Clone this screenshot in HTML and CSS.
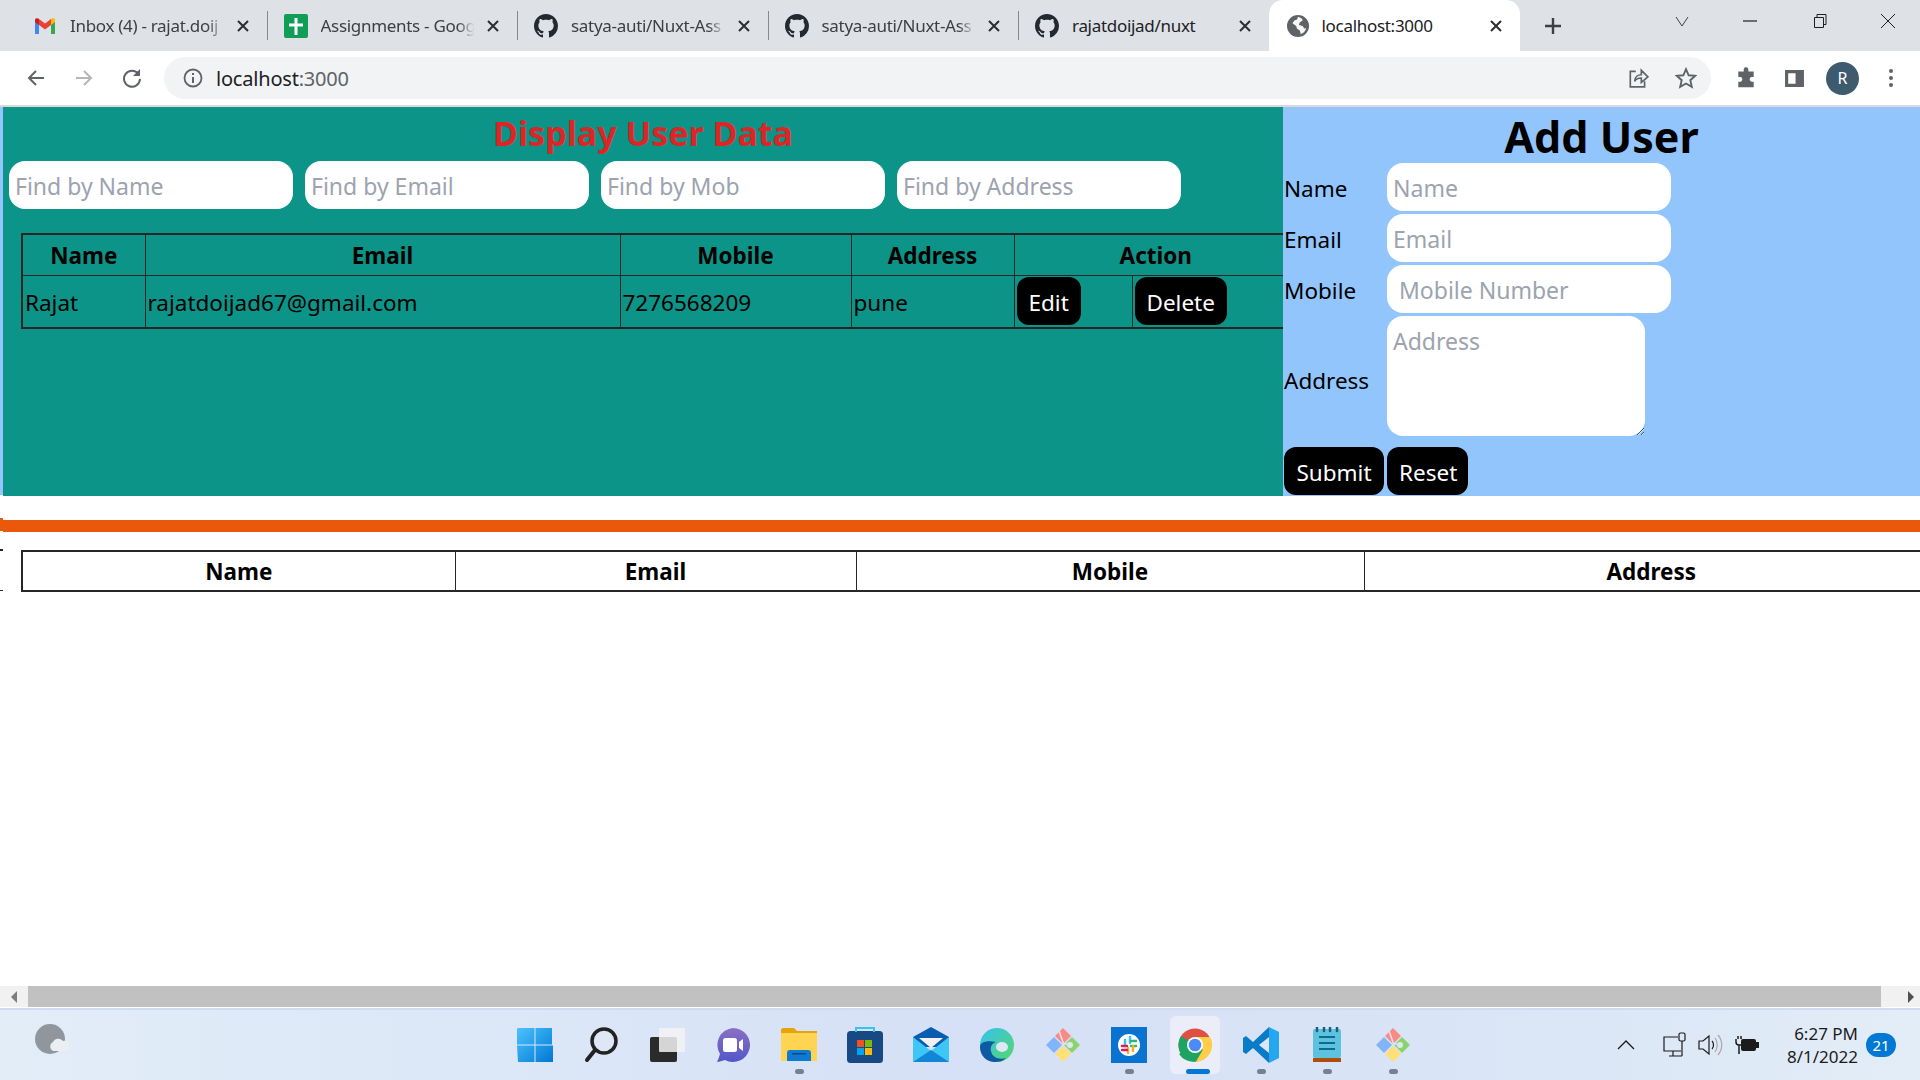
FILE: index.html
```html
<!DOCTYPE html>
<html lang="en">
<head>
  <meta charset="UTF-8" />
  <title>localhost:3000</title>
  <link rel="stylesheet" href="styles.css">
</head>
<body>
  <svg class="defs" width="0" height="0">
    <symbol id="gh" viewBox="0 0 16 16"><path fill="#24292f" d="M8 0C3.58 0 0 3.58 0 8c0 3.54 2.29 6.53 5.47 7.59.4.07.55-.17.55-.38 0-.19-.01-.82-.01-1.49-2.01.37-2.53-.49-2.69-.94-.09-.23-.48-.94-.82-1.13-.28-.15-.68-.52-.01-.53.63-.01 1.08.58 1.23.82.72 1.21 1.87.87 2.33.66.07-.52.28-.87.51-1.07-1.78-.2-3.64-.89-3.64-3.95 0-.87.31-1.59.82-2.15-.08-.2-.36-1.02.08-2.12 0 0 .67-.21 2.2.82.64-.18 1.32-.27 2-.27.68 0 1.36.09 2 .27 1.53-1.04 2.2-.82 2.2-.82.44 1.1.16 1.92.08 2.12.51.56.82 1.27.82 2.15 0 3.07-1.87 3.75-3.65 3.95.29.25.54.73.54 1.48 0 1.07-.01 1.93-.01 2.2 0 .21.15.46.55.38A8.013 8.013 0 0016 8c0-4.42-3.58-8-8-8z"/></symbol>
    <symbol id="x" viewBox="0 0 14 14"><path d="M2 2l10 10M12 2L2 12" stroke="#2b2d30" stroke-width="2" fill="none"/></symbol>
    <symbol id="gitk" viewBox="0 0 36 36">
      <path fill="#f98a85" d="M18 1l8 8-8 8-8-8z"/>
      <path fill="#8cd46a" d="M27 10l8 8-8 8-8-8z"/>
      <path fill="#ffe078" d="M18 19l8 8-8 8-8-8z"/>
      <path fill="#82b4f8" d="M9 10l8 8-8 8-8-8z"/>
      <circle cx="25" cy="18" r="3" fill="#dfe6f5"/>
      <path d="M14 4l5 14M22 17h-4" stroke="#dfe6f5" stroke-width="1.500" fill="none"/>
    </symbol>
  </svg>

  <div class="tabstrip">
    <div class="tab">
      <svg class="favicon" viewBox="0 0 24 24"><path fill="#4285f4" d="M2 6v14h4V10z"/><path fill="#34a853" d="M18 10v10h4V6z"/><path fill="#ea4335" d="M6 5v6l6 4.500 6-4.500V5l-6 4.500z"/><path fill="#fbbc04" d="M18 5v6l4-3V6c0-2-2.500-2.500-4-1z"/><path fill="#c5221f" d="M6 5v6L2 8V6c0-2 2.500-2.500 4-1z"/></svg>
      <span class="tab-title">Inbox (4) - rajat.doij</span>
      <svg class="tab-close"><use href="#x"/></svg>
    </div>
    <i class="sep"></i>
    <div class="tab">
      <svg class="favicon" viewBox="0 0 24 24"><rect width="24" height="24" rx="2" fill="#0f9d58"/><path d="M10.500 4h3v5.500H19v3h-5.500V21h-3v-8.500H5v-3h5.500z" fill="#fff"/></svg>
      <span class="tab-title">Assignments - Goog</span>
      <svg class="tab-close"><use href="#x"/></svg>
    </div>
    <i class="sep"></i>
    <div class="tab">
      <svg class="favicon"><use href="#gh"/></svg>
      <span class="tab-title">satya-auti/Nuxt-Ass</span>
      <svg class="tab-close"><use href="#x"/></svg>
    </div>
    <i class="sep"></i>
    <div class="tab">
      <svg class="favicon"><use href="#gh"/></svg>
      <span class="tab-title">satya-auti/Nuxt-Ass</span>
      <svg class="tab-close"><use href="#x"/></svg>
    </div>
    <i class="sep"></i>
    <div class="tab">
      <svg class="favicon"><use href="#gh"/></svg>
      <span class="tab-title no-fade">rajatdoijad/nuxt</span>
      <svg class="tab-close"><use href="#x"/></svg>
    </div>
    <div class="tab active">
      <svg class="favicon globe" viewBox="0 0 24 24"><circle cx="12" cy="12" r="11" fill="#5f6368"/><path fill="#fff" d="M12 2c3 1 5 2 5 4l-3 2-1 3 4 1 2 3 2-1c-1 4-3 6-6 7l-1-4-3-2-1-3-4-3 2-3 3-1z" opacity=".95"/><circle cx="12" cy="12" r="11" fill="none" stroke="#5f6368" stroke-width="2"/></svg>
      <span class="tab-title no-fade">localhost:3000</span>
      <svg class="tab-close"><use href="#x"/></svg>
    </div>
    <svg class="new-tab" viewBox="0 0 18 18"><path d="M9 1v16M1 9h16" stroke="#3c4043" stroke-width="2.400"/></svg>
    <div class="win-controls">
      <svg viewBox="0 0 16 16" class="win-caret"><path d="M2 4l6 9 6-9" stroke="#3c4043" fill="none"/></svg>
      <svg viewBox="0 0 16 16" class="win-min"><path d="M1 8h14" stroke="#1f1f1f" stroke-width="1.200"/></svg>
      <svg viewBox="0 0 16 16" class="win-max"><path d="M2.500 4.500h9v10h-9zM5 4.500V1.500h9v10h-2.500" stroke="#1f1f1f" fill="none"/></svg>
      <svg viewBox="0 0 16 16" class="win-cls"><path d="M1 1l14 14M15 1L1 15" stroke="#1f1f1f" fill="none"/></svg>
    </div>
  </div>

  <div class="toolbar">
    <svg class="tool" viewBox="0 0 20 20"><path d="M18 10H3M10 3l-7 7 7 7" stroke="#5f6368" stroke-width="2" fill="none"/></svg>
    <svg class="tool" viewBox="0 0 20 20"><path d="M2 10h15M10 3l7 7-7 7" stroke="#b4b6b9" stroke-width="2" fill="none"/></svg>
    <svg class="tool" viewBox="0 0 20 20"><path d="M16.500 6A8 8 0 1 0 18 11" stroke="#5f6368" stroke-width="2" fill="none"/><path d="M18 1v7h-7z" fill="#5f6368"/></svg>
    <div class="omnibox">
      <svg class="info" viewBox="0 0 20 20"><circle cx="10" cy="10" r="8.500" stroke="#5f6368" stroke-width="1.800" fill="none"/><path d="M10 9v6M10 5v2" stroke="#5f6368" stroke-width="2"/></svg>
      <span class="url">localhost<span class="url-port">:3000</span></span>
      <svg class="omni-icon" viewBox="0 0 20 20"><path d="M8 4H3v14h13v-5" stroke="#5f6368" stroke-width="1.500" fill="none"/><path d="M7 13c0-4 3-6 6-6V3l6 6-6 5v-4c-3 0-5 1-6 3z" stroke="#5f6368" stroke-width="1.500" fill="none"/></svg>
      <svg class="omni-icon star" viewBox="0 0 20 20"><path d="M10 2l2.400 5.500 6 .5-4.500 4 1.400 6L10 15l-5.300 3 1.400-6L1.600 8l6-.5z" stroke="#5f6368" stroke-width="1.700" fill="none"/></svg>
    </div>
    <svg class="ext" viewBox="0 0 20 20"><path fill="#5f6368" d="M8 1.500a2.300 2.300 0 0 1 4 0c.3.7.2 1.500.2 2.500H17v5c-1 0-1.800-.1-2.500.2a2.300 2.300 0 0 0 0 4c.7.300 1.500.3 2.500.3v5H3v-5c1 0 2 0 2.500-.3a2.300 2.300 0 0 0 0-4C5 8.900 4 9 3 9V4h5c0-1-.2-1.800 0-2.500z"/></svg>
    <svg class="panel-icon" viewBox="0 0 20 20"><path fill="#5f6368" d="M1 2h18v16H1zm3 3v10h7V5z"/></svg>
    <div class="avatar">R</div>
    <svg class="dots" viewBox="0 0 4 20"><circle cx="2" cy="3" r="2" fill="#5f6368"/><circle cx="2" cy="10" r="2" fill="#5f6368"/><circle cx="2" cy="17" r="2" fill="#5f6368"/></svg>
  </div>

  <div class="page">
    <div class="edge">
      <div class="edge-blue"></div>
      <div class="edge-orange"></div>
      <div class="edge-tick"></div>
      <div class="edge-tick tick-thin"></div>
    </div>
    <div class="content">
      <div class="top">
        <section class="display">
          <h1 class="display-title">Display User Data</h1>
          <div class="filters">
            <input class="field" placeholder="Find by Name">
            <input class="field" placeholder="Find by Email">
            <input class="field" placeholder="Find by Mob">
            <input class="field" placeholder="Find by Address">
          </div>
          <table class="users">
            <colgroup><col class="u-name"><col class="u-email"><col class="u-mob"><col class="u-addr"><col class="u-edit"><col class="u-del"></colgroup>
            <tr>
              <th>Name</th><th>Email</th><th>Mobile</th><th>Address</th><th colspan="2">Action</th>
            </tr>
            <tr>
              <td>Rajat</td>
              <td>rajatdoijad67@gmail.com</td>
              <td>7276568209</td>
              <td>pune</td>
              <td class="cell-btn"><button class="btn">Edit</button></td>
              <td class="cell-btn"><button class="btn">Delete</button></td>
            </tr>
          </table>
        </section>
        <section class="add">
          <h1 class="add-title">Add User</h1>
          <form class="add-form">
            <label>Name</label><input class="field" placeholder="Name">
            <label>Email</label><input class="field" placeholder="Email">
            <label>Mobile</label><input class="field field-wide" placeholder="Mobile Number">
            <label class="label-area">Address</label><textarea class="field area" placeholder="Address"></textarea>
          </form>
          <div class="add-actions">
            <button class="btn">Submit</button>
            <button class="btn">Reset</button>
          </div>
        </section>
      </div>
      <div class="rule"></div>
      <table class="users-2">
        <colgroup><col class="v-name"><col class="v-email"><col class="v-mob"><col class="v-addr"></colgroup>
        <tr><th>Name</th><th>Email</th><th>Mobile</th><th>Address</th></tr>
      </table>
    </div>
  </div>

  <div class="hscroll">
    <div class="hs-btn"><i class="arrow-l"></i></div>
    <div class="hs-thumb"></div>
    <div class="hs-btn hs-right"><i class="arrow-r"></i></div>
  </div>

  <div class="taskbar">
    <div class="weather">
      <svg viewBox="0 0 34 32" width="34" height="32"><circle cx="15" cy="15" r="15" fill="#8f969e"/><path d="M18 27a5 5 0 0 1 0-9 6 6 0 0 1 10-1 5 5 0 0 1 3 10z" fill="#eceff2"/></svg>
    </div>
    <div class="task-icons">
      <div class="ti"><svg viewBox="0 0 36 36" width="36" height="36"><defs><linearGradient id="w" x1="0" y1="0" x2="1" y2="1"><stop offset="0" stop-color="#4cc2ff"/><stop offset="1" stop-color="#0078d4"/></linearGradient></defs><path fill="url(#w)" d="M1 1h16.500v16.500H0V2zM18.500 1H35v16.500H18.500zM0 18.500h17.500V35H1zM18.500 18.500H36V35H18.500z"/></svg></div>
      <div class="ti"><svg viewBox="0 0 34 36" width="34" height="36"><circle cx="20" cy="14" r="12" stroke="#222" stroke-width="3.500" fill="#dfe6f5"/><path d="M11 23L3 33" stroke="#222" stroke-width="4" stroke-linecap="round"/></svg></div>
      <div class="ti"><svg viewBox="0 0 36 36" width="36" height="36"><rect x="1" y="10" width="27" height="25" rx="2" fill="#2b2b2b"/><rect x="10" y="1" width="26" height="24" rx="1" fill="#f3f3f3" opacity=".85"/></svg></div>
      <div class="ti"><svg viewBox="0 0 36 36" width="36" height="36"><defs><linearGradient id="c" x1="0" y1="0" x2="0" y2="1"><stop offset="0" stop-color="#8b6fc4"/><stop offset="1" stop-color="#5258c8"/></linearGradient></defs><path fill="url(#c)" d="M18 1a17 17 0 1 1-8 32l-7 2c-1 0-1-1 0-2l2-6A17 17 0 0 1 18 1z"/><rect x="8" y="11" width="14" height="14" rx="2.500" fill="#fff"/><path d="M24 15l4-3v12l-4-3z" fill="#fff"/></svg></div>
      <div class="ti ti-run"><svg viewBox="0 0 36 36" width="36" height="36"><path fill="#e3a50b" d="M0 3c0-1 1-2 2-2h11l3 3h20v28H0z"/><path fill="#ffd452" d="M0 6h36v28H0z"/><path fill="#0f7bd0" d="M6 34v-8c0-2 1-3 3-3h18c2 0 3 1 3 3v8z"/><rect x="11" y="26" width="14" height="1.500" fill="#0a4d8a"/></svg></div>
      <div class="ti"><svg viewBox="0 0 36 36" width="36" height="36"><rect y="4" width="36" height="32" rx="3.500" fill="#174a85"/><path d="M9 5V1h18v4" stroke="#35c4f0" stroke-width="2" fill="none"/><rect x="10" y="13" width="7" height="7" fill="#f25022"/><rect x="18" y="13" width="7" height="7" fill="#7fba00"/><rect x="10" y="21" width="7" height="7" fill="#00a4ef"/><rect x="18" y="21" width="7" height="7" fill="#ffb900"/></svg></div>
      <div class="ti"><svg viewBox="0 0 36 36" width="36" height="36"><path fill="#0a5cb0" d="M0 10L18 0l18 10v10H0z"/><path fill="#f2f2f2" d="M6 11h24l-12 10z"/><path fill="#3ec6f7" d="M0 10l18 14 18-14v25H0z"/><path fill="#1186d6" d="M0 35l18-12 18 12z"/></svg></div>
      <div class="ti"><svg viewBox="0 0 36 36" width="36" height="36"><defs><linearGradient id="e" x1="0" y1="0" x2="1" y2="1"><stop offset="0" stop-color="#35c1f1"/><stop offset="1" stop-color="#56d86a"/></linearGradient></defs><circle cx="18" cy="18" r="17" fill="url(#e)"/><path fill="#0c59a4" d="M1 20c0 9 7 15 15 15 4 0 8-1 11-4-6 2-14 0-15-7-1-4 1-8 5-9-9-2-16 0-16 5z"/><ellipse cx="23" cy="20" rx="6" ry="5" fill="#dfe6f5"/></svg></div>
      <div class="ti"><svg width="36" height="36"><use href="#gitk"/></svg></div>
      <div class="ti ti-run"><svg viewBox="0 0 36 36" width="36" height="36"><rect width="36" height="36" fill="#0a72d1"/><circle cx="18" cy="18" r="11" fill="#fff"/><path d="M19 10v6M14 13v6" stroke="#36c5f0" stroke-width="2.500" stroke-linecap="round"/><path d="M20 14h5M20 19h5" stroke="#2eb67d" stroke-width="2.500" stroke-linecap="round"/><path d="M22 19v5M17 21v5" stroke="#ecb22e" stroke-width="2.500" stroke-linecap="round"/><path d="M11 19h5M11 23h5" stroke="#e01e5a" stroke-width="2.500" stroke-linecap="round"/></svg></div>
      <div class="ti ti-active"><svg viewBox="0 0 34 34" width="34" height="34"><circle cx="17" cy="17" r="16.500" fill="#dd5144"/><path d="M17 17L3 26A16.500 16.500 0 0 1 3 8z" fill="#1da462"/><path d="M17 9h15a16.500 16.500 0 0 1-14 24.500L10 22z" fill="#ffcd46"/><path d="M1 26a16.500 16.500 0 0 0 17 7.500l7-12H9z" fill="#1da462"/><circle cx="17" cy="17" r="8" fill="#fff"/><circle cx="17" cy="17" r="6.300" fill="#4c8bf5"/></svg></div>
      <div class="ti ti-run"><svg viewBox="0 0 36 36" width="36" height="36"><path fill="#25a6f0" d="M26 0l10 5v26l-10 5z"/><path fill="#0a7cc7" d="M26 0v36L10 21 3 27l-3-2v-14l3-2 7 6z"/><path fill="#dfe6f5" d="M26 10v16l-10-8z"/></svg></div>
      <div class="ti ti-run"><svg viewBox="0 0 28 36" width="28" height="36"><rect y="2" width="28" height="29" rx="2" fill="#5cc2de"/><rect y="31" width="28" height="4" fill="#ad4f0a"/><path d="M6 10h16M6 16h16M6 22h16" stroke="#0e6a8f" stroke-width="2"/><path d="M4 0v4M11 0v4M17 0v4M24 0v4" stroke="#1a5f7a" stroke-width="2.500" stroke-linecap="round"/></svg></div>
      <div class="ti ti-run"><svg width="36" height="36"><use href="#gitk"/></svg></div>
    </div>
    <div class="tray">
      <svg class="tray-caret" viewBox="0 0 20 12"><path d="M2 10l8-8 8 8" stroke="#1b1b1b" stroke-width="1.300" fill="none"/></svg>
      <svg class="tray-net" viewBox="0 0 26 26"><path d="M16 5H2v14h17M7 24h13M11 19v5" stroke="#1b1b1b" stroke-width="1.200" fill="none"/><rect x="17" y="1" width="6" height="8" rx="1.500" stroke="#1b1b1b" stroke-width="1.200" fill="none"/><path d="M20 9v15" stroke="#1b1b1b" stroke-width="1.200"/></svg>
      <svg class="tray-vol" viewBox="0 0 26 22"><path d="M1 7h4l6-5v18l-6-5H1z" stroke="#1b1b1b" stroke-width="1.200" fill="none"/><path d="M14 7c2 2 2 6 0 8" stroke="#1b1b1b" stroke-width="1.200" fill="none"/><path d="M17 4c3 4 3 10 0 14M20 1c5 6 5 14 0 20" stroke="#a8a8a8" stroke-width="1.200" fill="none"/></svg>
      <svg class="tray-bat" viewBox="0 0 26 20"><path d="M1 4v3c0 2 1 3 3 3h2M3 1v3M6 1v3M4 10v9" stroke="#1b1b1b" stroke-width="1.500" fill="none"/><rect x="6" y="4" width="15" height="12" rx="2" fill="#1b1b1b"/><rect x="21" y="7" width="3" height="6" fill="#1b1b1b"/></svg>
      <div class="clock"><div>6:27 PM</div><div>8/1/2022</div></div>
      <div class="badge">21</div>
    </div>
  </div>
</body>
</html>
```

FILE: styles.css
```css
* {
  box-sizing: border-box;
}
html, body {
  margin: 0;
  height: 100%;
  overflow: hidden;
}
body {
  font-family: "Noto Sans", sans-serif;
  color: #000;
  background: #fff;
  display: flex;
  flex-direction: column;
}
.defs {
  position: absolute;
}

/* browser chrome */
.tabstrip {
  height: 51px;
  flex: none;
  background: #dee1e6;
  display: flex;
  align-items: center;
  padding-left: 17px;
}
.tab {
  width: 249.5px;
  height: 51px;
  flex: none;
  display: flex;
  align-items: center;
  padding: 0 17px 0 16px;
}
.tab.active {
  background: #fff;
  width: 251px;
  padding-left: 18px;
  border-radius: 14px 14px 0 0;
}
.sep {
  width: 1px;
  height: 29px;
  flex: none;
  background: #85888c;
}
.favicon {
  width: 24px;
  height: 24px;
  flex: none;
}
.favicon.globe {
  width: 22px;
  height: 22px;
}
.tab-title {
  flex: 1;
  min-width: 0;
  margin: 0 10px 0 13px;
  font-size: 17px;
  letter-spacing: -0.3px;
  color: #3c4043;
  white-space: nowrap;
  overflow: hidden;
  -webkit-mask-image: linear-gradient(90deg, #000 88%, transparent 99%);
  mask-image: linear-gradient(90deg, #000 88%, transparent 99%);
}
.tab-title.no-fade {
  -webkit-mask-image: none;
  mask-image: none;
  color: #202124;
}
.tab-close {
  width: 14px;
  height: 14px;
  flex: none;
}
.new-tab {
  width: 18px;
  height: 18px;
  margin-left: 24px;
  flex: none;
}
.win-controls {
  margin-left: auto;
  display: flex;
  align-items: center;
  height: 42px;
  align-self: flex-start;
  padding-right: 24px;
}
.win-controls svg {
  width: 16px;
  height: 16px;
}
.win-caret {
  margin-right: 52px;
}
.win-min {
  margin-right: 54px;
}
.win-max {
  margin-right: 52px;
}
.toolbar {
  height: 56px;
  flex: none;
  border-bottom: 2px solid #d9d9d9;
  display: flex;
  align-items: center;
  padding: 0 0 0 26px;
}
.tool {
  width: 20px;
  height: 20px;
  margin-right: 28px;
  flex: none;
}
.tool:nth-child(3) {
  margin-right: 22px;
}
.omnibox {
  width: 1547px;
  height: 42px;
  flex: none;
  background: #f1f3f4;
  border-radius: 21px;
  display: flex;
  align-items: center;
  padding-left: 19px;
}
.info {
  width: 20px;
  height: 20px;
  margin-right: 13px;
}
.url {
  font-size: 20px;
  letter-spacing: -0.2px;
  color: #202124;
}
.url-port {
  color: #5f6368;
}
.omni-icon {
  width: 22px;
  height: 22px;
  margin-left: auto;
  margin-right: 26px;
}
.omni-icon.star {
  margin-left: 0;
  margin-right: 14px;
}
.ext {
  width: 22px;
  height: 22px;
  margin-left: 24px;
}
.panel-icon {
  width: 21px;
  height: 21px;
  margin-left: 27px;
}
.avatar {
  width: 33px;
  height: 33px;
  margin-left: 21px;
  border-radius: 50%;
  background: #3e5a6e;
  color: #fff;
  font-size: 16px;
  display: flex;
  align-items: center;
  justify-content: center;
}
.dots {
  width: 4px;
  height: 20px;
  margin-left: 30px;
}

/* page */
.page {
  height: 879px;
  flex: none;
  display: flex;
  overflow: hidden;
}
.edge {
  width: 3px;
  flex: none;
}
.edge-blue {
  height: 388px;
  background: #93c5fd;
}
.edge-orange {
  height: 13px;
  margin-top: 23px;
  background: #ea580c;
}
.edge-tick {
  height: 2px;
  margin-top: 18px;
  background: #262626;
}
.tick-thin {
  height: 1px;
  margin-top: 39px;
}
.content {
  flex: 1;
  min-width: 0;
}
.top {
  display: flex;
  height: 389px;
}
.display {
  width: 1280px;
  flex: none;
  background: #0d9488;
  overflow: hidden;
}
.display-title {
  margin: 0;
  height: 54px;
  line-height: 52px;
  font-size: 34px;
  font-weight: 700;
  text-align: center;
  color: #dc2626;
}
.filters {
  display: flex;
  gap: 12px;
  padding-left: 6px;
}
.field {
  width: 284px;
  height: 48px;
  border: none;
  outline: none;
  border-radius: 16px;
  background: #fff;
  padding: 2px 6px 0;
  font-family: inherit;
  font-size: 23px;
}
.field::placeholder {
  color: #9ca3af;
  opacity: 1;
}
.field-wide {
  padding-left: 12px;
}
.area {
  width: 258px;
  height: 120px;
  padding-top: 9px;
}
.users {
  width: 1278px;
  margin: 24px 0 0 18px;
  border-collapse: collapse;
  table-layout: fixed;
  border: 2px solid #262626;
}
.users th, .users td {
  border: 1px solid #262626;
  font-size: 22.5px;
  padding: 2px 2px 0;
}
.users .cell-btn {
  padding-top: 0;
}
.users th {
  height: 41px;
}
.users td {
  height: 53px;
  white-space: nowrap;
}
.u-name { width: 123px; }
.u-email { width: 475px; }
.u-mob { width: 231px; }
.u-addr { width: 163px; }
.u-edit { width: 118px; }
.btn {
  height: 48px;
  border: none;
  border-radius: 12px;
  background: #000;
  color: #fff;
  font-family: inherit;
  font-size: 22.5px;
  padding: 2px 12px 0;
  vertical-align: middle;
}
.add {
  flex: 1;
  background: #93c5fd;
}
.add-title {
  margin: 0;
  height: 56px;
  line-height: 59px;
  font-size: 43px;
  font-weight: 700;
  text-align: center;
}
.add-form {
  display: grid;
  grid-template-columns: 104px auto;
  justify-content: start;
  align-items: center;
  row-gap: 3px;
  font-size: 22.5px;
}
.add-form label {
  padding: 2px 0 0 1px;
}
.add-form .label-area {
  padding-top: 9px;
}
.add-actions {
  display: flex;
  gap: 3px;
  margin: 11px 0 0 1px;
}
.add-actions .btn:first-child {
  width: 100px;
}
.add-actions .btn:last-child {
  width: 81px;
}
.rule {
  height: 12px;
  margin-top: 24px;
  background: #ea580c;
}
.users-2 {
  width: 1919px;
  margin: 18px 0 0 18px;
  border-collapse: collapse;
  table-layout: fixed;
  border: 2px solid #262626;
}
.users-2 th {
  height: 40px;
  border: 1px solid #262626;
  font-size: 22.5px;
  padding-top: 2px;
}
.v-name { width: 433px; }
.v-email { width: 401px; }
.v-mob { width: 508px; }

/* scrollbar */
.hscroll {
  height: 22px;
  flex: none;
  display: flex;
  background: #f1f1f1;
  border-bottom: 1px solid #fff;
}
.hs-btn {
  width: 28px;
  display: flex;
  align-items: center;
  justify-content: center;
}
.hs-right {
  width: 39px;
  padding-left: 21px;
}
.hs-thumb {
  width: 1853px;
  background: #c1c1c1;
}
.arrow-l {
  border: 6px solid transparent;
  border-left: 0;
  border-right: 6px solid #7d7d7d;
}
.arrow-r {
  border: 6px solid transparent;
  border-right: 0;
  border-left: 6px solid #505050;
}

/* taskbar */
.taskbar {
  height: 72px;
  flex: none;
  border-top: 2px solid #cfdbee;
  background: linear-gradient(90deg, #e2edf8, #dbe6f7 30%, #d6e0f6 50%, #d9e4f6 75%, #e2edf7);
  display: flex;
  align-items: center;
}
.weather {
  width: 502px;
  flex: none;
  padding: 0 0 10px 35px;
  display: flex;
}
.task-icons {
  display: flex;
  align-items: center;
}
.ti {
  width: 66px;
  height: 58px;
  display: flex;
  align-items: center;
  justify-content: center;
  position: relative;
}
.ti-run::after, .ti-active::after {
  content: "";
  position: absolute;
  left: 29px;
  bottom: 0;
  width: 9px;
  height: 5px;
  border-radius: 3px;
  background: #76808e;
}
.ti-active {
  background: #ebeef9;
  border-radius: 6px;
  width: 50px;
  margin: 0 8px;
  box-shadow: 5px 0 0 -1px #dde3f4;
}
.ti-active::after {
  left: 16px;
  width: 24px;
  background: #0078d4;
}
.tray {
  margin-left: auto;
  display: flex;
  align-items: center;
  padding-right: 24px;
}
.tray-caret {
  width: 20px;
  height: 12px;
  margin-right: 26px;
}
.tray-net {
  width: 26px;
  height: 26px;
  margin-right: 10px;
}
.tray-vol {
  width: 26px;
  height: 22px;
  margin-right: 11px;
}
.tray-bat {
  width: 26px;
  height: 20px;
  margin-right: 26px;
}
.clock {
  font-size: 17px;
  line-height: 23px;
  text-align: right;
  color: #1b1b1b;
}
.badge {
  width: 30px;
  height: 24px;
  margin-left: 8px;
  border-radius: 12px;
  background: #0078d4;
  color: #fff;
  font-size: 15px;
  display: flex;
  align-items: center;
  justify-content: center;
}
```
